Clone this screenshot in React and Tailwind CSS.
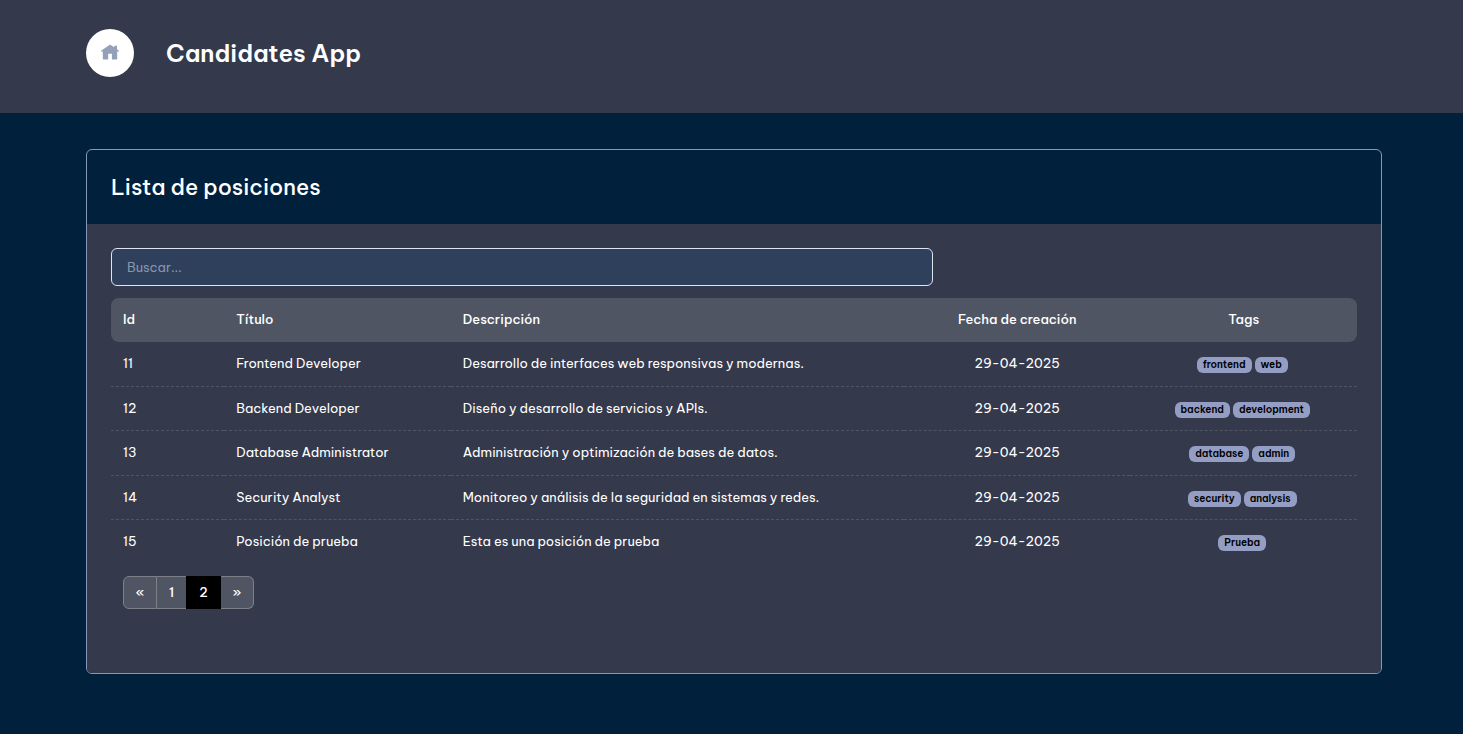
import React, { useState } from "react";

const positions = [
  { id: 11, title: "Frontend Developer", description: "Desarrollo de interfaces web responsivas y modernas.", date: "29-04-2025", tags: ["frontend", "web"] },
  { id: 12, title: "Backend Developer", description: "Diseño y desarrollo de servicios y APIs.", date: "29-04-2025", tags: ["backend", "development"] },
  { id: 13, title: "Database Administrator", description: "Administración y optimización de bases de datos.", date: "29-04-2025", tags: ["database", "admin"] },
  { id: 14, title: "Security Analyst", description: "Monitoreo y análisis de la seguridad en sistemas y redes.", date: "29-04-2025", tags: ["security", "analysis"] },
  { id: 15, title: "Posición de prueba", description: "Esta es una posición de prueba", date: "29-04-2025", tags: ["Prueba"] },
];

function HomeIcon() {
  return (
    <svg viewBox="0 0 20 20" className="size-5" fill="currentColor" aria-hidden="true">
      <path d="M9.4 1.9q.6-.4 1.2 0L14.3 4.3V3.1q0-.4.4-.4h1.9q.4 0 .4.4v3.1l1.6 1.2q.5.5.1 1-.4.4-.9.2H17.2v7.2q0 .7-.7.7H12.5q-.6 0-.6-.6V10.8H8.2v5.1q0 .6-.6.6H3.5q-.7 0-.7-.7V8.6H2.2q-.5.2-.9-.2-.3-.5.1-1z" />
    </svg>
  );
}

function Header() {
  return (
    <header className="flex h-[113px] items-start gap-8 bg-[#34394c] pt-[29px] pr-[81px] pl-[86px]">
      <a
        href="#"
        aria-label="Inicio"
        className="flex size-12 shrink-0 items-center justify-center rounded-full bg-white text-[#94a0b8]"
      >
        <HomeIcon />
      </a>
      <h1 className="text-2xl leading-12 font-semibold">Candidates App</h1>
    </header>
  );
}

function PositionsTable({ rows }) {
  return (
    <table className="mt-3 w-full table-fixed border-separate border-spacing-0 text-[13px] leading-5">
      <colgroup>
        <col className="w-[9.09%]" />
        <col className="w-[18.18%]" />
        <col className="w-[36.37%]" />
        <col className="w-[18.18%]" />
        <col className="w-[18.18%]" />
      </colgroup>
      <thead className="[&_th]:bg-[#505564] [&_th]:px-3 [&_th]:pb-[2px] [&_th]:font-medium">
        <tr className="h-11 text-left">
          <th scope="col" className="rounded-l-lg">Id</th>
          <th scope="col">Título</th>
          <th scope="col">Descripción</th>
          <th scope="col" className="text-center">Fecha de creación</th>
          <th scope="col" className="rounded-r-lg text-center">Tags</th>
        </tr>
      </thead>
      <tbody className="[&>tr:not(:last-child)>td]:border-b [&>tr>td]:border-dashed [&>tr>td]:border-[#505564] [&>tr>td]:px-3 [&>tr>td]:pb-[2px]">
        {rows.map((row) => (
          <tr key={row.id} className="h-11 odd:not-last:h-[45px]">
            <td>{row.id}</td>
            <td>{row.title}</td>
            <td>{row.description}</td>
            <td className="text-center">{row.date}</td>
            <td>
              <div className="flex justify-center pt-1">
                {row.tags.map((tag) => (
                  <span key={tag} className="mr-[3px] rounded-md bg-[#949dc4] px-[6px] text-[10px] leading-4 font-semibold text-black">
                    {tag}
                  </span>
                ))}
              </div>
            </td>
          </tr>
        ))}
      </tbody>
    </table>
  );
}

function Pagination() {
  const base = "h-[33px] border-y border-[#7d8088] bg-[#505564] text-[13px] font-medium";
  return (
    <nav aria-label="Paginación" className="mt-3 ml-3 flex">
      <button type="button" aria-label="Anterior" className={`${base} w-[34px] rounded-l-md border-x`}>«</button>
      <button type="button" className={`${base} w-[29px]`}>1</button>
      <button type="button" aria-current="page" className="h-[33px] w-[35px] bg-black text-[13px] font-medium">2</button>
      <button type="button" aria-label="Siguiente" className={`${base} w-[33px] rounded-r-md border-r`}>»</button>
    </nav>
  );
}

export default function App() {
  const [query, setQuery] = useState("");
  const rows = positions.filter((p) =>
    `${p.title} ${p.description}`.toLowerCase().includes(query.toLowerCase())
  );
  return (
    <div className="min-h-screen bg-[#00203b] font-['Be_Vietnam_Pro',Inter,sans-serif] text-white">
      <Header />
      <main className="pt-9 pr-[81px] pb-[60px] pl-[86px]">
        <section className="overflow-hidden rounded-md border border-[#8698b8]">
          <div className="px-6 py-[19px]">
            <h2 className="text-[22px] leading-9 font-medium">Lista de posiciones</h2>
          </div>
          <div className="bg-[#34394c] px-6 pt-6 pb-16">
            <input
              type="search"
              aria-label="Buscar"
              placeholder="Buscar..."
              value={query}
              onChange={(e) => setQuery(e.target.value)}
              className="block h-[38px] w-[66%] rounded-md border border-[#dfe5ef] bg-[#2f405d] px-[15px] text-[13px] text-white placeholder:text-[#8795ac]"
            />
            <PositionsTable rows={rows} />
            <Pagination />
          </div>
        </section>
      </main>
    </div>
  );
}
